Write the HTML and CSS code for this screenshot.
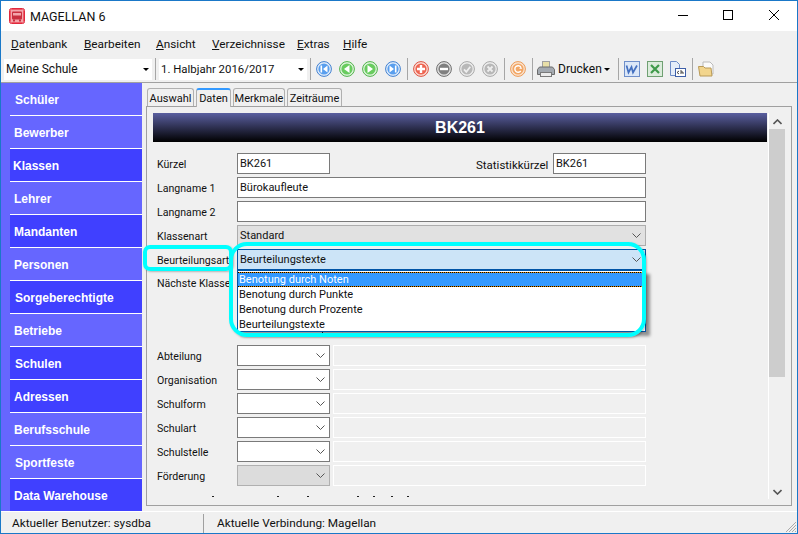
FILE: index.html
```html
<!DOCTYPE html>
<html lang="de">
<head>
<meta charset="utf-8">
<title>MAGELLAN 6</title>
<link rel="stylesheet" href="styles.css">
</head>
<body>
<div class="window">
  <header class="titlebar">
    <svg class="app-icon" width="16" height="16" viewBox="0 0 16 16"><rect x="0.5" y="0.5" width="15" height="15" rx="2" fill="#f3a6ac" stroke="#e0283c"/><rect x="1.500" y="1.500" width="13" height="13" rx="1" fill="none" stroke="#ef5a68"/><rect x="3" y="3.500" width="10" height="8" rx="1" fill="#c9303f"/><rect x="4" y="5" width="8" height="2.500" fill="#f3a6ac"/><rect x="4" y="11.500" width="2" height="2" fill="#c9303f"/><rect x="10" y="11.500" width="2" height="2" fill="#c9303f"/></svg>
    <span class="app-title">MAGELLAN 6</span>
    <div class="winbtns">
      <svg width="46" height="30" viewBox="0 0 46 30"><path d="M19 14.500h10" stroke="#000"/></svg>
      <svg width="46" height="30" viewBox="0 0 46 30"><rect x="18.500" y="9.500" width="9" height="9" fill="none" stroke="#000"/></svg>
      <svg width="46" height="30" viewBox="0 0 46 30"><path d="M18 9l10 10M28 9l-10 10" stroke="#000"/></svg>
    </div>
  </header>
  <nav class="menubar">
    <span class="menu m-a"><u>D</u>atenbank</span>
    <span class="menu m-b"><u>B</u>earbeiten</span>
    <span class="menu m-c"><u>A</u>nsicht</span>
    <span class="menu m-d"><u>V</u>erzeichnisse</span>
    <span class="menu m-e"><u>E</u>xtras</span>
    <span class="menu"><u>H</u>ilfe</span>
  </nav>
  <div class="toolbar">
    <div class="tcombo"><span>Meine Schule</span><i class="caret"></i></div>
    <b class="sep first"></b>
    <div class="tcombo term"><span>1. Halbjahr 2016/2017</span><i class="caret"></i></div>
    <b class="sep"></b>
    <div class="group">
      <svg class="rb" viewBox="0 0 16 16"><circle cx="8" cy="8" r="7.400" fill="#e3eefb" stroke="#3f7fd0"/><circle cx="8" cy="8" r="5.600" fill="#5a9fee"/><path d="M4.500 4.500h1.600v7H4.500zM11.500 4.500v7L7 8z" fill="#fff"/></svg>
      <svg class="rb" viewBox="0 0 16 16"><circle cx="8" cy="8" r="7.400" fill="#e0f4de" stroke="#4fb349"/><circle cx="8" cy="8" r="5.600" fill="#69cc5f"/><path d="M10.500 4v8L5 8z" fill="#fff"/></svg>
      <svg class="rb" viewBox="0 0 16 16"><circle cx="8" cy="8" r="7.400" fill="#e0f4de" stroke="#4fb349"/><circle cx="8" cy="8" r="5.600" fill="#69cc5f"/><path d="M5.500 4v8L11 8z" fill="#fff"/></svg>
      <svg class="rb" viewBox="0 0 16 16"><circle cx="8" cy="8" r="7.400" fill="#e3eefb" stroke="#3f7fd0"/><circle cx="8" cy="8" r="5.600" fill="#5a9fee"/><path d="M11.500 4.500H9.900v7h1.600zM4.500 4.500v7L9 8z" fill="#fff"/></svg>
    </div>
    <b class="sep"></b>
    <div class="group">
      <svg class="rb" viewBox="0 0 16 16"><circle cx="8" cy="8" r="7.400" fill="#fbdcd6" stroke="#dd5340"/><circle cx="8" cy="8" r="5.600" fill="#ee6450"/><path d="M6.800 4h2.400v2.800H12v2.400H9.200V12H6.800V9.200H4V6.800h2.800z" fill="#fff"/></svg>
      <svg class="rb" viewBox="0 0 16 16"><circle cx="8" cy="8" r="7.400" fill="#e2e2e2" stroke="#6d6d6d"/><circle cx="8" cy="8" r="5.600" fill="#808080"/><path d="M4 6.800h8v2.400H4z" fill="#fff"/></svg>
      <svg class="rb" viewBox="0 0 16 16"><circle cx="8" cy="8" r="7.400" fill="#eee" stroke="#a8a8a8"/><circle cx="8" cy="8" r="5.600" fill="#b8b8b8"/><path d="M5 8.300l2.300 2.500 4-5" fill="none" stroke="#eee" stroke-width="1.800"/></svg>
      <svg class="rb" viewBox="0 0 16 16"><circle cx="8" cy="8" r="7.400" fill="#eee" stroke="#a8a8a8"/><circle cx="8" cy="8" r="5.600" fill="#b8b8b8"/><path d="M5.500 5.500l5 5M10.500 5.500l-5 5" fill="none" stroke="#eee" stroke-width="1.800"/></svg>
    </div>
    <b class="sep"></b>
    <div class="group">
      <svg class="rb" viewBox="0 0 16 16"><circle cx="8" cy="8" r="7.400" fill="#fbe3cf" stroke="#ec9a55"/><circle cx="8" cy="8" r="5.600" fill="#f2a766"/><path d="M10.800 6a3.300 3.300 0 1 0 0 4" fill="none" stroke="#fff" stroke-width="1.400"/><path d="M9.200 7.800h3L10.800 5.500z" fill="#fff"/></svg>
    </div>
    <b class="sep"></b>
    <svg class="printer" width="18" height="18" viewBox="0 0 18 18"><rect x="5.500" y="1.500" width="7" height="7" fill="#e8dfa8" stroke="#a0a0a0"/><path d="M.5 9.500l2-2.500h13l2 2.500v5H.5z" fill="#a3a9b0" stroke="#6c6c6c"/><rect x="3.500" y="12.500" width="11" height="4" fill="#ececec" stroke="#7a7a7a"/></svg>
    <span class="print-label">Drucken</span><i class="caret print-caret"></i>
    <b class="sep"></b>
    <div class="group">
      <svg class="doc" width="16" height="16" viewBox="0 0 16 16"><rect x=".5" y=".5" width="15" height="15" fill="#dbe7f8" stroke="#6f8fca"/><path d="M2.500 4.500l2 7 3-5.500 1.500 5.500 4-7" fill="none" stroke="#4470c0" stroke-width="1.700"/></svg>
      <svg class="doc" width="16" height="16" viewBox="0 0 16 16"><rect x=".5" y=".5" width="15" height="15" fill="#dcecdc" stroke="#6fa072"/><path d="M4 4l8 8M12 4l-8 8" fill="none" stroke="#3f9a4a" stroke-width="2.200"/></svg>
      <svg class="doc" width="16" height="16" viewBox="0 0 16 16"><path d="M.5.500h6l3 3v11h-9z" fill="#e5edf9" stroke="#6d8cc8"/><rect x="5.500" y="7.500" width="10" height="8" fill="#fff" stroke="#3e5fa8"/><path d="M9 10l-2 1.500L9 13M11 9v4M11 11h2v2" fill="none" stroke="#333" stroke-width=".9"/></svg>
    </div>
    <b class="sep"></b>
    <svg class="doc" width="16" height="16" viewBox="0 0 16 16"><path d="M5 1h7l3 3v9H5z" fill="#fbfbfb" stroke="#bbb"/><path d="M.5 5.500h5l1.500 1.500h6l1 8H2z" fill="#f2d58d" stroke="#b99a58"/></svg>
  </div>
  <div class="body">
    <aside class="sidebar">
      <a class="nav wide-in">Schüler</a>
      <a class="nav">Bewerber</a>
      <a class="nav on narrow-in">Klassen</a>
      <a class="nav">Lehrer</a>
      <a class="nav on">Mandanten</a>
      <a class="nav">Personen</a>
      <a class="nav on wide-in">Sorgeberechtigte</a>
      <a class="nav">Betriebe</a>
      <a class="nav on wide-in">Schulen</a>
      <a class="nav on">Adressen</a>
      <a class="nav">Berufsschule</a>
      <a class="nav wide-in">Sportfeste</a>
      <a class="nav on">Data Warehouse</a>
    </aside>
    <main class="content">
      <div class="tabs">
        <span class="tab t1">Auswahl</span>
        <span class="tab t2 active">Daten</span>
        <span class="tab t3">Merkmale</span>
        <span class="tab t4">Zeiträume</span>
      </div>
      <section class="pane">
        <div class="form">
          <h1 class="banner">BK261</h1>
          <div class="row"><label>Kürzel</label><span class="field short">BK261</span><label class="stat">Statistikkürzel</label><span class="field short">BK261</span></div>
          <div class="row"><label>Langname 1</label><span class="field wide">Bürokaufleute</span></div>
          <div class="row"><label>Langname 2</label><span class="field wide"></span></div>
          <div class="row"><label>Klassenart</label><span class="field wide flat">Standard<svg class="chev" width="9" height="5" viewBox="0 0 9 5"><path d="M.5.500l4 4 4-4" fill="none" stroke="#555"/></svg></span></div>
          <div class="row"><label>Beurteilungsart</label><span class="field wide focus">Beurteilungstexte<svg class="chev" width="9" height="5" viewBox="0 0 9 5"><path d="M.5.500l4 4 4-4" fill="none" stroke="#555"/></svg></span></div>
          <div class="row next"><label>Nächste Klasse</label><span class="field next-box"></span></div>
          <div class="row"><label>Abteilung</label><span class="field short"><svg class="chev" width="9" height="5" viewBox="0 0 9 5"><path d="M.5.500l4 4 4-4" fill="none" stroke="#555"/></svg></span><span class="ghost"></span></div>
          <div class="row"><label>Organisation</label><span class="field short"><svg class="chev" width="9" height="5" viewBox="0 0 9 5"><path d="M.5.500l4 4 4-4" fill="none" stroke="#555"/></svg></span><span class="ghost"></span></div>
          <div class="row"><label>Schulform</label><span class="field short"><svg class="chev" width="9" height="5" viewBox="0 0 9 5"><path d="M.5.500l4 4 4-4" fill="none" stroke="#555"/></svg></span><span class="ghost"></span></div>
          <div class="row"><label>Schulart</label><span class="field short"><svg class="chev" width="9" height="5" viewBox="0 0 9 5"><path d="M.5.500l4 4 4-4" fill="none" stroke="#555"/></svg></span><span class="ghost"></span></div>
          <div class="row"><label>Schulstelle</label><span class="field short"><svg class="chev" width="9" height="5" viewBox="0 0 9 5"><path d="M.5.500l4 4 4-4" fill="none" stroke="#555"/></svg></span><span class="ghost"></span></div>
          <div class="row"><label>Förderung</label><span class="field short dis"><svg class="chev" width="9" height="5" viewBox="0 0 9 5"><path d="M.5.500l4 4 4-4" fill="none" stroke="#555"/></svg></span><span class="ghost"></span></div>
          <svg class="clipped" width="200" height="1" viewBox="0 0 200 1"><path d="M0 0h2v1H0zM65 0h2v1h-2zM95 0h2v1h-2zM145 0h2v1h-2zM161 0h2v1h-2zM179 0h2v1h-2zM195 0h2v1h-2z" fill="#222"/></svg>
          <ul class="droplist">
            <li class="hl">Benotung durch Noten</li>
            <li>Benotung durch Punkte</li>
            <li>Benotung durch Prozente</li>
            <li>Beurteilungstexte</li>
          </ul>
          <div class="mark m1"></div>
          <div class="mark m2"></div>
        </div>
        <div class="vscroll">
          <svg class="arrow-up" width="9" height="6" viewBox="0 0 9 6"><path d="M.5 5l4-4 4 4" fill="none" stroke="#555" stroke-width="1.600"/></svg>
          <div class="track"><div class="thumb"></div></div>
          <svg width="9" height="6" viewBox="0 0 9 6"><path d="M.5 1l4 4 4-4" fill="none" stroke="#555" stroke-width="1.600"/></svg>
        </div>
      </section>
    </main>
  </div>
  <footer class="status">
    <span class="st1">Aktueller Benutzer: sysdba</span>
    <span class="st2">Aktuelle Verbindung: Magellan</span>
    <svg class="grip" width="12" height="12" viewBox="0 0 12 12"><path d="M11 1L1 11M11 4L4 11M11 7L7 11M11 10L10 11" stroke="#aaa"/></svg>
  </footer>
</div>
</body>
</html>
```
FILE: styles.css
```css
* { box-sizing: border-box; }
html, body { margin: 0; padding: 0; }
body { width: 798px; height: 534px; overflow: hidden; font-family: Roboto, "Noto Sans", sans-serif; font-size: 11px; color: #111; }
.window { width: 798px; height: 534px; border: 1px solid #1a78c8; background: #f0f0f0; display: flex; flex-direction: column; }
.titlebar { height: 30px; background: #fff; display: flex; align-items: center; padding-left: 8px; flex: none; }
.app-icon { flex: none; margin-top: -1px; }
.app-title { margin-left: 5px; font-size: 12.500px; }
.winbtns { margin-left: auto; display: flex; }
.menubar { height: 26px; display: flex; align-items: center; padding-left: 10px; flex: none; padding-bottom: 1px; }
.menu { font-size: 11.800px; width: 73px; flex: none; }
.m-b { width: 72px; }
.m-c { width: 56px; }
.m-d { width: 85px; }
.m-e { width: 46px; }
.toolbar { height: 26px; display: flex; align-items: center; border-bottom: 1px solid #a0a0a0; flex: none; padding-left: 3px; padding-bottom: 1px; }
.tcombo { height: 21px; width: 148px; background: #fff; display: flex; align-items: center; padding-left: 2px; position: relative; font-size: 12px; flex: none; }
.term { font-size: 11.400px; }
.caret { width: 0; height: 0; border: 3px solid transparent; border-top: 3px solid #000; border-bottom: 0; display: block; flex: none; }
.tcombo .caret { position: absolute; right: 3px; top: 9px; }
.sep { width: 1px; height: 22px; background: #a6a6a6; margin: 0 5px 0 6px; flex: none; }
.sep.first { margin: 0 3px; }
.tcombo + .sep:not(.first) { margin-left: 3px; }
.group { display: flex; gap: 7px; flex: none; }
.rb { width: 16px; height: 16px; flex: none; display: block; }
.doc { flex: none; display: block; }
.printer { margin-left: -1px; margin-right: 3px; flex: none; }
.print-label { font-size: 12px; width: 46px; flex: none; }
.print-caret { margin: 0 2px 0 0; }
.body { flex: 1; display: flex; min-height: 0; }
.sidebar { width: 141px; flex: none; display: flex; flex-direction: column; background: #6666ff; padding-left: 1px; }
.nav { height: 33px; flex: none; margin-left: 8px; border-bottom: 1px solid #fff; color: #fff; font-family: "Liberation Sans", sans-serif; font-weight: 700; font-size: 12px; line-height: 34px; padding-left: 4px; }
.nav:last-child { border-bottom: 0; height: 32px; }
.wide-in { padding-left: 5px; }
.narrow-in { padding-left: 3px; }
.on { background: #4040ff; }
.content { flex: 1; padding: 5px 5px 0 4px; min-width: 0; display: flex; flex-direction: column; }
.tabs { display: flex; height: 18px; padding-left: 1px; flex: none; position: relative; z-index: 1; gap: 2px; }
.tab { height: 18px; border: 1px solid #b0b0b0; border-bottom: 0; border-radius: 3px 3px 0 0; line-height: 19px; background: #f0f0f0; font-size: 11px; text-align: center; flex: none; }
.t1 { width: 47px; }
.t2 { width: 35px; }
.t3 { width: 52px; }
.t4 { width: 55px; }
.tab.active { height: 19px; border-top: 2px solid #3399ff; line-height: 18px; }
.pane { flex: 1; border: 1px solid #a0a0a0; display: flex; min-height: 0; margin-bottom: 5px; }
.form { flex: 1; position: relative; padding: 6px 0 0 6px; min-width: 0; }
.banner { margin: 0 1px 11px 0; height: 29px; background: linear-gradient(#5a5fa0, #000); color: #fff; font-family: "Liberation Sans", sans-serif; font-size: 16px; font-weight: 700; line-height: 29px; text-align: center; }
.row { display: flex; align-items: center; height: 21px; margin-bottom: 3px; }
.row label { width: 84px; padding: 2px 0 0 4px; flex: none; font-size: 10.600px; }
.field { height: 21px; border: 1px solid #7a7a7a; background: #fff; padding-left: 2px; line-height: 19px; position: relative; font-size: 11px; display: block; flex: none; }
.short { width: 93px; }
.wide { width: 409px; }
.row label.stat { width: 77px; margin-left: 146px; padding: 2px 0 0; font-size: 11.500px; }
.flat { background: #e1e1e1; border-color: #adadad; }
.focus { background: #cce4f7; border-color: #0054a6; }
.chev { position: absolute; right: 4px; top: 7px; }
.next { height: 69px; align-items: flex-start; }
.next label { line-height: 21px; padding-top: 0; }
.next-box { width: 86px; height: 61px; border-color: #222; }
.dis { background: #dcdcdc; border-color: #b0b0b0; }
.ghost { width: 313px; height: 21px; border: 1px solid #fff; margin-left: 3px; flex: none; }
.clipped { display: block; margin: 10px 0 0 59px; }
.droplist { position: absolute; left: 90px; top: 163px; width: 409px; height: 62px; margin: 0; padding: 1px 0 0; list-style: none; background: #fff; border: 1px solid #0054a6; box-shadow: 4px 4px 3px rgba(0,0,0,.4); font-size: 11px; }
.droplist li { height: 15px; line-height: 15px; padding-left: 1px; }
.droplist .hl { color: #fff; background: repeating-linear-gradient(90deg, #000 0 1px, #e08a00 1px 2px) top / 100% 1px no-repeat, repeating-linear-gradient(90deg, #000 0 1px, #e08a00 1px 2px) bottom / 100% 1px no-repeat, #3399ff; }
.mark { position: absolute; border: 4px solid #00ffff; box-shadow: 1px 1px 2px rgba(0,0,0,.25); }
.m1 { left: -4px; top: 138px; width: 90px; height: 26px; border-radius: 7px; }
.m2 { left: 82px; top: 135px; width: 417px; height: 95px; border-radius: 18px; }
.vscroll { width: 17px; flex: none; border-left: 1px solid #fff; display: flex; flex-direction: column; align-items: center; margin: 6px 6px 6px 0; padding-bottom: 4px; }
.arrow-up { margin-top: 6px; flex: none; }
.vscroll svg { flex: none; }
.track { flex: 1; width: 100%; margin-top: 4px; }
.thumb { height: 248px; background: #cdcdcd; width: 100%; }
.status { height: 22px; flex: none; border-top: 1px solid #fff; display: flex; align-items: center; position: relative; font-size: 11.800px; padding-top: 1px; }
.st1 { width: 203px; padding-left: 11px; border-right: 1px solid #a0a0a0; height: 19px; line-height: 19px; }
.st2 { padding-left: 13px; }
.grip { position: absolute; right: 0; bottom: 0; }
```
